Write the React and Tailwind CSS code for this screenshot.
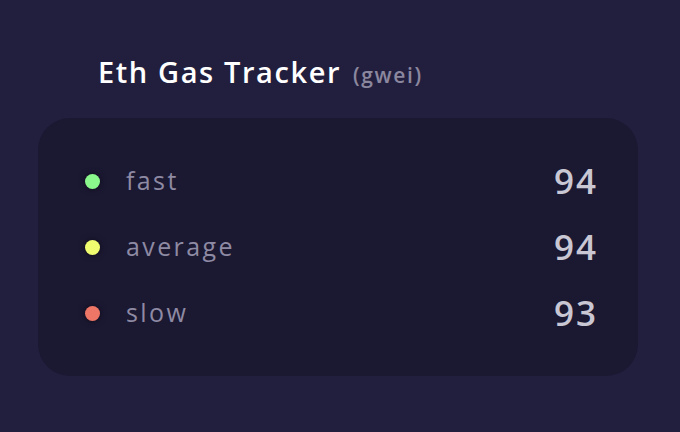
import React from 'react';

const rows = [
  { label: 'fast', value: 94, dot: 'bg-[#8af78c]' },
  { label: 'average', value: 94, dot: 'bg-[#f0fc70]' },
  { label: 'slow', value: 93, dot: 'bg-[#ee7667]' },
];

const App = () => {
  return (
    <div className="w-[680px] h-[432px] bg-[#221f3e] font-['Open_Sans',sans-serif] pt-[50px] pl-[38px] pr-[42px]">
      {/* Title */}
      <div className="flex items-baseline gap-[12px] pl-[60px] h-[44px]">
        <h1 className="text-[29px] font-semibold text-white tracking-[1.6px]">Eth Gas Tracker</h1>
        <span className="text-[21px] font-semibold text-[#8b879f] tracking-[1.6px]">(gwei)</span>
      </div>

      {/* Card */}
      <div className="mt-[24px] h-[258px] rounded-[32px] bg-[#1b1832] pl-[47px] pr-[42px] py-[32px] flex flex-col justify-center gap-[32px]">
        {rows.map((row) => (
          <div key={row.label} className="flex items-center h-[34px]">
            <span className={`w-[15px] h-[15px] rounded-full ${row.dot} shadow-[0_0_6px_rgba(0,0,0,0.5)]`} />
            <span className="ml-[26px] text-[25px] text-[#8e8aa3] tracking-[2.4px]">{row.label}</span>
            <span className="ml-auto text-[35px] font-semibold text-[#c9c7d3] tracking-[2px] -mr-[2px]">{row.value}</span>
          </div>
        ))}
      </div>
    </div>
  );
};

export default App;
